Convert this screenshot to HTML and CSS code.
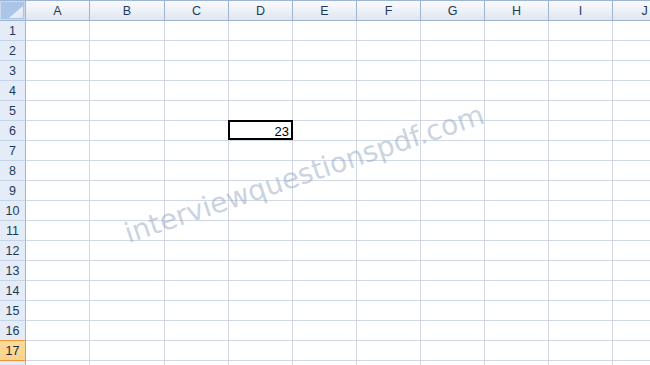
FILE: index.html
```html
<!DOCTYPE html>
<html lang="en">
<head>
<meta charset="utf-8">
<title>Sheet</title>
<link rel="stylesheet" href="styles.css">
</head>
<body>
<div class="sheet">
  <div class="corner"><span class="tri"></span></div>
  <div class="ch">A</div><div class="ch">B</div><div class="ch">C</div><div class="ch">D</div><div class="ch">E</div><div class="ch">F</div><div class="ch">G</div><div class="ch">H</div><div class="ch">I</div><div class="ch">J</div>

  <div class="rh">1</div><div class="c"></div><div class="c"></div><div class="c"></div><div class="c"></div><div class="c"></div><div class="c"></div><div class="c"></div><div class="c"></div><div class="c"></div><div class="c"></div>
  <div class="rh">2</div><div class="c"></div><div class="c"></div><div class="c"></div><div class="c"></div><div class="c"></div><div class="c"></div><div class="c"></div><div class="c"></div><div class="c"></div><div class="c"></div>
  <div class="rh">3</div><div class="c"></div><div class="c"></div><div class="c"></div><div class="c"></div><div class="c"></div><div class="c"></div><div class="c"></div><div class="c"></div><div class="c"></div><div class="c"></div>
  <div class="rh">4</div><div class="c"></div><div class="c"></div><div class="c"></div><div class="c"></div><div class="c"></div><div class="c"></div><div class="c"></div><div class="c"></div><div class="c"></div><div class="c"></div>
  <div class="rh">5</div><div class="c"></div><div class="c"></div><div class="c"></div><div class="c"></div><div class="c"></div><div class="c"></div><div class="c"></div><div class="c"></div><div class="c"></div><div class="c"></div>
  <div class="rh">6</div><div class="c"></div><div class="c"></div><div class="c"></div><div class="c num active">23</div><div class="c"></div><div class="c"></div><div class="c"></div><div class="c"></div><div class="c"></div><div class="c"></div>
  <div class="rh">7</div><div class="c"></div><div class="c"></div><div class="c"></div><div class="c"></div><div class="c"></div><div class="c"></div><div class="c"></div><div class="c"></div><div class="c"></div><div class="c"></div>
  <div class="rh">8</div><div class="c"></div><div class="c"></div><div class="c"></div><div class="c"></div><div class="c"></div><div class="c"></div><div class="c"></div><div class="c"></div><div class="c"></div><div class="c"></div>
  <div class="rh">9</div><div class="c"></div><div class="c"></div><div class="c"></div><div class="c"></div><div class="c"></div><div class="c"></div><div class="c"></div><div class="c"></div><div class="c"></div><div class="c"></div>
  <div class="rh">10</div><div class="c"></div><div class="c"></div><div class="c"></div><div class="c"></div><div class="c"></div><div class="c"></div><div class="c"></div><div class="c"></div><div class="c"></div><div class="c"></div>
  <div class="rh">11</div><div class="c"></div><div class="c"></div><div class="c"></div><div class="c"></div><div class="c"></div><div class="c"></div><div class="c"></div><div class="c"></div><div class="c"></div><div class="c"></div>
  <div class="rh">12</div><div class="c"></div><div class="c"></div><div class="c"></div><div class="c"></div><div class="c"></div><div class="c"></div><div class="c"></div><div class="c"></div><div class="c"></div><div class="c"></div>
  <div class="rh">13</div><div class="c"></div><div class="c"></div><div class="c"></div><div class="c"></div><div class="c"></div><div class="c"></div><div class="c"></div><div class="c"></div><div class="c"></div><div class="c"></div>
  <div class="rh">14</div><div class="c"></div><div class="c"></div><div class="c"></div><div class="c"></div><div class="c"></div><div class="c"></div><div class="c"></div><div class="c"></div><div class="c"></div><div class="c"></div>
  <div class="rh">15</div><div class="c"></div><div class="c"></div><div class="c"></div><div class="c"></div><div class="c"></div><div class="c"></div><div class="c"></div><div class="c"></div><div class="c"></div><div class="c"></div>
  <div class="rh">16</div><div class="c"></div><div class="c"></div><div class="c"></div><div class="c"></div><div class="c"></div><div class="c"></div><div class="c"></div><div class="c"></div><div class="c"></div><div class="c"></div>
  <div class="rh hl">17</div><div class="c"></div><div class="c"></div><div class="c"></div><div class="c"></div><div class="c"></div><div class="c"></div><div class="c"></div><div class="c"></div><div class="c"></div><div class="c"></div>
  <div class="rh"></div><div class="c"></div><div class="c"></div><div class="c"></div><div class="c"></div><div class="c"></div><div class="c"></div><div class="c"></div><div class="c"></div><div class="c"></div><div class="c"></div>

  <div class="watermark">interviewquestionspdf.com</div>
</div>
</body>
</html>
```
FILE: styles.css
```css
html, body {
  margin: 0;
  padding: 0;
  background: #ffffff;
  overflow: hidden;
  width: 650px;
  height: 365px;
}

.sheet {
  position: relative;
  display: grid;
  grid-template-columns: 26px 64px 75px repeat(8, 64px);
  grid-template-rows: 21px repeat(18, 20px);
  width: 677px;
  font-family: "Liberation Sans", Arial, sans-serif;
  font-size: 12.5px;
}

.sheet > div {
  box-sizing: border-box;
}

.corner {
  position: relative;
  background: #abc5e9;
  border-top: 1px solid #9db5d3;
  border-right: 1px solid #9eb6ce;
  border-bottom: 1px solid #9eb6ce;
  box-shadow: inset 1px 1px 0 #c9d9ef, inset -1px -1px 0 #c9d9ef;
}

.tri {
  position: absolute;
  right: 2px;
  bottom: 2px;
  width: 14px;
  height: 12px;
  background: linear-gradient(135deg, #f4f7fb 0%, #dfe7f2 100%);
  clip-path: polygon(100% 0, 100% 100%, 0 100%);
}

.ch {
  display: flex;
  align-items: center;
  justify-content: center;
  padding-top: 1px;
  color: #1e395b;
  background: linear-gradient(to bottom, #f9fafc 0%, #eef2f8 45%, #dfe6ef 100%);
  border-top: 1px solid #9db5d3;
  border-right: 1px solid #9eb6ce;
  border-bottom: 1px solid #9eb6ce;
}

.rh {
  display: flex;
  align-items: center;
  justify-content: center;
  padding-top: 1px;
  color: #1e395b;
  background: #e4ecf7;
  border-right: 1px solid #9eb6ce;
  border-bottom: 1px solid #c5d5e9;
}

.rh.hl {
  background: linear-gradient(to bottom, #fbdb9c 0%, #f9d38b 100%);
  border-right-color: #f29536;
  border-bottom-color: #f29536;
  box-shadow: 0 -1px 0 #f29536;
  color: #1e2a3a;
}

.c {
  border-right: 1px solid #d0d7e5;
  border-bottom: 1px solid #d0d7e5;
}

.num {
  display: flex;
  align-items: flex-end;
  justify-content: flex-end;
  padding-right: 3px;
  line-height: 16px;
  font-size: 13px;
  color: #000000;
}

.active {
  position: relative;
}

.active::after {
  content: "";
  position: absolute;
  left: -1px;
  top: -1px;
  right: -1px;
  bottom: 0;
  border: 2px solid #000000;
}

.watermark {
  position: absolute;
  left: 130px;
  top: 220px;
  font-family: "DejaVu Sans", Verdana, sans-serif;
  font-size: 28px;
  line-height: 28px;
  white-space: nowrap;
  color: rgba(150, 168, 192, 0.5);
  transform-origin: 0 100%;
  transform: rotate(-18.6deg);
  pointer-events: none;
}
```
